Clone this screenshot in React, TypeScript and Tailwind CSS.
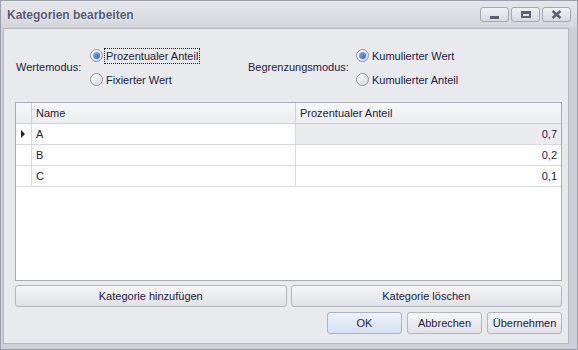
import React from 'react';

const font = "font-['Liberation_Sans','Arial',sans-serif]";

const Radio = ({ checked, label, focused }: { checked?: boolean; label: string; focused?: boolean }) => (
    <div className="flex items-center h-[12px]">
        <span className="w-[13px] h-[13px] rounded-full border border-[#8e94a6] bg-gradient-to-br from-[#ffffff] to-[#d3d6de] flex items-center justify-center shrink-0">
            {checked && <span className="w-[7px] h-[7px] rounded-full bg-gradient-to-br from-[#8fb4ec] to-[#2f5fb8]"></span>}
        </span>
        <span className={`ml-[2px] px-[1px] leading-[14px] ${focused ? 'outline outline-1 outline-dotted outline-[#222]' : ''}`}>
            {label}
        </span>
    </div>
);

const Btn = ({ children, className = '', primary }: { children: React.ReactNode; className?: string; primary?: boolean }) => (
    <div
        className={`h-[22px] flex items-center justify-center rounded-[3px] border ${
            primary
                ? 'border-[#a9b3c8] bg-gradient-to-b from-[#eef3fc] to-[#d6e0f3]'
                : 'border-[#b3b5bf] bg-gradient-to-b from-[#f7f7f9] to-[#e1e2e7]'
        } ${className}`}
    >
        {children}
    </div>
);

const rows = [
    { name: 'A', value: '0,7', current: true },
    { name: 'B', value: '0,2' },
    { name: 'C', value: '0,1' },
];

const WinBtn = ({ children }: { children: React.ReactNode }) => (
    <div className="w-[29px] h-[15px] rounded-[3px] border border-[#a4a6b2] bg-gradient-to-b from-[#f2f2f5] to-[#d8d9df] flex items-center justify-center">
        {children}
    </div>
);

export default function App() {
    return (
        <div className={`w-[578px] h-[350px] ${font} text-[11px] text-[#1e2040] bg-[#cfd0d7] border border-[#9c9eaa] flex flex-col`}>
            {/* title bar */}
            <div className="h-[27px] flex items-center justify-between pl-[6px] pr-[6px] bg-gradient-to-b from-[#e6e7eb] to-[#d5d6dc]">
                <span className="text-[12px] font-bold text-[#555a78] [text-shadow:0_0_2px_#fff]">Kategorien bearbeiten</span>
                <div className="flex gap-[2px] -mt-[1px]">
                    <WinBtn>
                        <span className="w-[9px] h-[3px] bg-[#5e6072] mt-[6px]"></span>
                    </WinBtn>
                    <WinBtn>
                        <span className="w-[10px] h-[7px] border-[2px] border-t-[3px] border-[#5e6072]"></span>
                    </WinBtn>
                    <WinBtn>
                        <svg width="11" height="9" viewBox="0 0 11 9">
                            <path d="M1.5 1 L9.5 8 M9.5 1 L1.5 8" stroke="#5e6072" strokeWidth="2.4" />
                        </svg>
                    </WinBtn>
                </div>
            </div>

            {/* client area */}
            <div className="flex-1 ml-[2px] mr-[8px] mb-[5px] bg-[#e9eaee] border border-[#b4b6c0] flex flex-col">
                {/* mode options */}
                <div className="h-[73px] flex items-center pl-[12px] pt-[4px]">
                    <div className="w-[232px] flex items-center">
                        <span className="w-[74px]">Wertemodus:</span>
                        <div className="flex flex-col gap-[12px]">
                            <Radio checked focused label="Prozentualer Anteil" />
                            <Radio label="Fixierter Wert" />
                        </div>
                    </div>
                    <div className="flex items-center">
                        <span className="w-[108px]">Begrenzungsmodus:</span>
                        <div className="flex flex-col gap-[12px]">
                            <Radio checked label="Kumulierter Wert" />
                            <Radio label="Kumulierter Anteil" />
                        </div>
                    </div>
                </div>

                {/* grid */}
                <div className="ml-[11px] mr-[6px] h-[179px] bg-white border border-[#a9abb6]">
                    <div className="flex h-[21px] bg-gradient-to-b from-[#f7f7f9] to-[#eceef1] border-b border-[#cfd1d8]">
                        <div className="w-[16px] border-r border-[#cfd1d8]"></div>
                        <div className="w-[264px] border-r border-[#cfd1d8] flex items-center pl-[4px]">Name</div>
                        <div className="flex-1 flex items-center pl-[4px]">Prozentualer Anteil</div>
                    </div>
                    {rows.map((r) => (
                        <div key={r.name} className="flex h-[21px] border-b border-[#d6d8de]">
                            <div className="w-[16px] border-r border-[#d6d8de] bg-white flex items-center justify-center">
                                {r.current && (
                                    <svg width="5" height="8" viewBox="0 0 5 8">
                                        <path d="M0 0 L4 4 L0 8 Z" fill="#1e2030" />
                                    </svg>
                                )}
                            </div>
                            <div className="w-[264px] border-r border-[#d6d8de] flex items-center pl-[4px]">{r.name}</div>
                            <div className={`flex-1 flex items-center justify-end pr-[4px] ${r.current ? 'bg-[#ebecf0]' : ''}`}>
                                {r.value}
                            </div>
                        </div>
                    ))}
                </div>

                {/* action buttons */}
                <div className="flex gap-[4px] ml-[11px] mr-[6px] mt-[4px]">
                    <Btn className="flex-1">Kategorie hinzufügen</Btn>
                    <Btn className="flex-1">Kategorie löschen</Btn>
                </div>
                <div className="flex justify-end gap-[5px] mr-[6px] mt-[5px]">
                    <Btn primary className="w-[75px]">OK</Btn>
                    <Btn className="w-[75px]">Abbrechen</Btn>
                    <Btn className="w-[75px]">Übernehmen</Btn>
                </div>
            </div>
        </div>
    );
}
